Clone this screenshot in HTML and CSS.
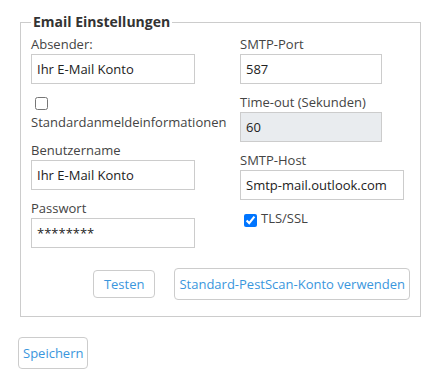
FILE: index.html
```html
<!DOCTYPE html>
<html lang="de">
<head>
<meta charset="utf-8">
<link rel="stylesheet" href="styles.css">
</head>
<body>
<div class="page">
  <fieldset class="box">
    <legend class="box-title">Email Einstellungen</legend>
    <div class="cols">
      <div class="col col-left">
        <div class="group">
          <label class="lbl">Absender:</label>
          <input class="inp" type="text" value="Ihr E-Mail Konto">
        </div>
        <div class="group">
          <input class="chk chk-block" type="checkbox">
          <div class="lbl">Standardanmeldeinformationen</div>
        </div>
        <div class="group">
          <label class="lbl">Benutzername</label>
          <input class="inp" type="text" value="Ihr E-Mail Konto">
        </div>
        <div class="group">
          <label class="lbl">Passwort</label>
          <input class="inp" type="text" value="********">
        </div>
      </div>
      <div class="col col-right">
        <div class="group">
          <label class="lbl">SMTP-Port</label>
          <input class="inp inp-short" type="text" value="587">
        </div>
        <div class="group">
          <label class="lbl">Time-out (Sekunden)</label>
          <input class="inp inp-short inp-disabled" type="text" value="60" readonly>
        </div>
        <div class="group">
          <label class="lbl">SMTP-Host</label>
          <input class="inp" type="text" value="Smtp-mail.outlook.com">
        </div>
        <div class="group check-row">
          <input class="chk" type="checkbox" checked>
          <span class="lbl">TLS/SSL</span>
        </div>
      </div>
    </div>
    <div class="actions">
      <button class="btn btn-test" type="button">Testen</button>
      <button class="btn" type="button">Standard-PestScan-Konto verwenden</button>
    </div>
  </fieldset>
  <div class="footer">
    <button class="btn" type="button">Speichern</button>
  </div>
</div>
</body>
</html>
```
FILE: styles.css
```css
html, body {
  margin: 0;
  padding: 0;
  background: #fff;
}
body {
  font-family: "Open Sans", "Liberation Sans", sans-serif;
  font-size: 13px;
  line-height: 20px;
  color: #333;
}
.page {
  padding: 12px 0 0 18px;
  width: 405px;
}
.box {
  margin: 0 2px;
  padding: 2px 10px 16px 10px;
  border: 1px solid #ccc;
  width: 379px;
}
.box-title {
  font-weight: 700;
  font-size: 14px;
  line-height: 20px;
  padding: 0 2px;
  margin-left: 0;
  color: #333;
}
.cols {
  display: flex;
}
.col {
  display: flex;
  flex-direction: column;
  gap: 8px;
}
.col-left {
  width: 209px;
}
.group {
  display: flex;
  flex-direction: column;
}
.lbl {
  color: #444;
  white-space: nowrap;
}
.inp {
  box-sizing: border-box;
  width: 164px;
  height: 30px;
  margin: 0;
  padding: 4px 5px;
  border: 1px solid #ccc;
  font-family: inherit;
  font-size: 13px;
  color: #222;
  background: #fff;
  outline: none;
}
.inp-short {
  width: 142px;
}
.inp-disabled {
  background: #e9ecef;
}
.chk {
  width: 13px;
  height: 13px;
  margin: 0;
}
.chk-block {
  display: block;
  margin: 5px 0 2px 4px;
}
.check-row {
  flex-direction: row;
  align-items: center;
  height: 20px;
}
.check-row .chk {
  margin: 5px 4px 0 4px;
}
.actions {
  display: flex;
  justify-content: flex-end;
  align-items: center;
  gap: 19px;
  margin-top: 20px;
}
.btn {
  font-family: inherit;
  font-size: 13px;
  line-height: 20px;
  color: #3a96dd;
  background: #fff;
  border: 1px solid #ccc;
  border-radius: 4px;
  padding: 5px 4px;
  margin: 0;
}
.btn-test {
  padding: 3px 10px;
}
.footer {
  margin-top: 20px;
}
```
